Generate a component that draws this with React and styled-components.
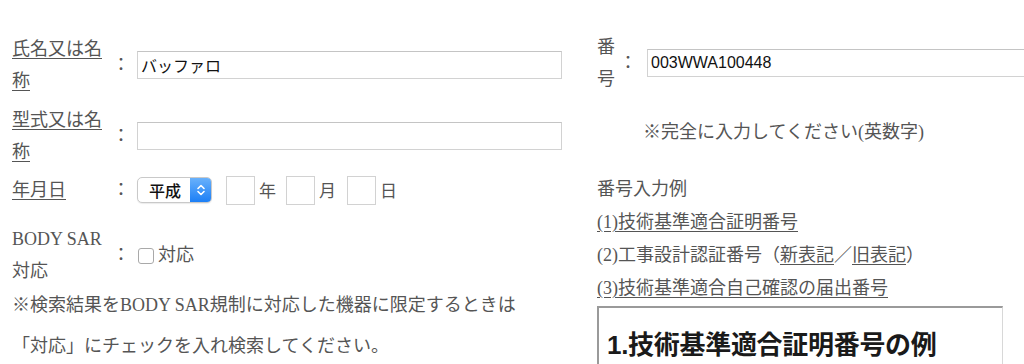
import React from "react";
import styled, { createGlobalStyle } from "styled-components";

const GlobalStyle = createGlobalStyle`
  html, body {
    margin: 0;
    padding: 0;
    background: #fff;
  }
  body {
    width: 1024px;
    height: 364px;
    overflow: hidden;
    font-family: "Liberation Serif", "Noto Sans CJK JP", serif;
    font-size: 18px;
    color: #555;
  }
`;

const Page = styled.div`
  box-sizing: border-box;
  display: flex;
  gap: 35px;
  width: 1024px;
  height: 364px;
  padding: 31px 0 0 12px;
  overflow: hidden;
`;

const LeftColumn = styled.div`
  flex: none;
  width: 550px;
`;

const RightColumn = styled.div`
  flex: none;
  width: 640px;
`;

const Row = styled.div`
  display: grid;
  grid-template-columns: ${(p) => p.$label}px ${(p) => p.$colon}px 1fr;
  align-items: center;
  line-height: 32px;
  margin-top: ${(p) => p.$top || 0}px;
`;

const Label = styled.div`
  text-decoration: ${(p) => (p.$link ? "underline" : "none")};
  text-underline-offset: 3px;
`;

const Colon = styled.div`
  padding-left: ${(p) => p.$pad || 0}px;
`;

const Field = styled.div`
  display: flex;
  align-items: center;
`;

const TextInput = styled.input`
  box-sizing: border-box;
  width: ${(p) => p.$width}px;
  height: 28px;
  border: 1px solid #d2d2d2;
  border-top-color: #c4c4c4;
  padding: 0 3px;
  font-family: "Liberation Sans", "Noto Sans CJK JP", sans-serif;
  font-size: 16px;
  color: #111;
  outline: none;
`;

const SelectBox = styled.div`
  box-sizing: border-box;
  display: flex;
  width: 75px;
  height: 26px;
  border: 1px solid #c9c9c9;
  border-radius: 5px;
  background: #fff;
  overflow: hidden;
  box-shadow: 0 1px 1px rgba(0, 0, 0, 0.08);
`;

const SelectText = styled.span`
  flex: 1;
  padding-left: 11px;
  font-family: "Noto Sans CJK JP", sans-serif;
  font-size: 16px;
  font-weight: 500;
  line-height: 24px;
  color: #111;
`;

const SelectArrow = styled.span`
  display: flex;
  align-items: center;
  justify-content: center;
  width: 21px;
  background: linear-gradient(#69b1fb, #1c7ff6);
`;

const SmallBox = styled.input`
  box-sizing: border-box;
  width: 29px;
  height: 29px;
  margin: 0 4px 0 ${(p) => p.$left}px;
  border: 1px solid #d2d2d2;
  padding: 0;
  outline: none;
`;

const Unit = styled.span`
  font-family: "Noto Sans CJK JP", sans-serif;
  font-size: 17px;
  color: #555;
`;

const CheckBox = styled.span`
  box-sizing: border-box;
  display: inline-block;
  width: 16px;
  height: 16px;
  margin: 2px 4px 0 1px;
  border: 1px solid #a9a9a9;
  border-radius: 3px;
  background: #fff;
`;

const Note = styled.p`
  margin: ${(p) => p.$top || 0}px 0 0 ${(p) => p.$indent || 0}px;
  line-height: ${(p) => p.$lh || 32}px;
`;

const ExampleList = styled.div`
  margin-top: 25px;
  line-height: 33px;
`;

const Link = styled.a`
  color: inherit;
  text-decoration: underline;
  text-underline-offset: 3px;
`;

const ExampleBox = styled.div`
  box-sizing: border-box;
  width: 406px;
  height: 80px;
  margin-top: 1px;
  border-top: 2px solid #9a9a9a;
  border-left: 2px solid #9a9a9a;
  border-right: 1px solid #d8d8d8;
  padding: 16px 0 0 8px;
`;

const ExampleTitle = styled.div`
  font-family: "Liberation Sans", "Noto Sans CJK JP", sans-serif;
  font-size: 26px;
  font-weight: 700;
  letter-spacing: -0.3px;
  color: #1a1a1a;
`;

function Chevrons() {
  return (
    <svg width="10" height="14" viewBox="0 0 10 14" fill="none">
      <path d="M2 5.5 L5 2.5 L8 5.5" stroke="#fff" strokeWidth="1.6" strokeLinecap="round" strokeLinejoin="round" />
      <path d="M2 8.5 L5 11.5 L8 8.5" stroke="#fff" strokeWidth="1.6" strokeLinecap="round" strokeLinejoin="round" />
    </svg>
  );
}

export default function App() {
  return (
    <>
      <GlobalStyle />
      <Page>
        <LeftColumn>
          <Row $label={100} $colon={25} $top={2}>
            <Label $link>氏名又は名称</Label>
            <Colon>：</Colon>
            <Field>
              <TextInput $width={425} defaultValue="バッファロ" />
            </Field>
          </Row>
          <Row $label={100} $colon={25} $top={7}>
            <Label $link>型式又は名称</Label>
            <Colon>：</Colon>
            <Field>
              <TextInput $width={425} />
            </Field>
          </Row>
          <Row $label={100} $colon={25} $top={6}>
            <Label $link>年月日</Label>
            <Colon>：</Colon>
            <Field>
              <SelectBox>
                <SelectText>平成</SelectText>
                <SelectArrow>
                  <Chevrons />
                </SelectArrow>
              </SelectBox>
              <SmallBox $left={14} />
              <Unit>年</Unit>
              <SmallBox $left={10} />
              <Unit>月</Unit>
              <SmallBox $left={11} />
              <Unit>日</Unit>
            </Field>
          </Row>
          <Row $label={100} $colon={25} $top={17}>
            <Label>BODY SAR 対応</Label>
            <Colon>：</Colon>
            <Field>
              <CheckBox />
              <span>対応</span>
            </Field>
          </Row>
          <Note $top={-2} $lh={41}>
            ※検索結果をBODY SAR規制に対応した機器に限定するときは
            <br />
            「対応」にチェックを入れ検索してください。
          </Note>
        </LeftColumn>

        <RightColumn>
          <Row $label={20} $colon={30}>
            <Label>番号</Label>
            <Colon $pad={2}>：</Colon>
            <Field>
              <TextInput $width={425} defaultValue="003WWA100448" />
            </Field>
          </Row>
          <Note $top={21} $indent={46}>
            ※完全に入力してください(英数字)
          </Note>
          <ExampleList>
            <div>番号入力例</div>
            <div>
              <Link href="#1">(1)技術基準適合証明番号</Link>
            </div>
            <div>
              (2)工事設計認証番号（<Link href="#2a">新表記</Link>／<Link href="#2b">旧表記</Link>）
            </div>
            <div>
              <Link href="#3">(3)技術基準適合自己確認の届出番号</Link>
            </div>
          </ExampleList>
          <ExampleBox>
            <ExampleTitle>1.技術基準適合証明番号の例</ExampleTitle>
          </ExampleBox>
        </RightColumn>
      </Page>
    </>
  );
}
